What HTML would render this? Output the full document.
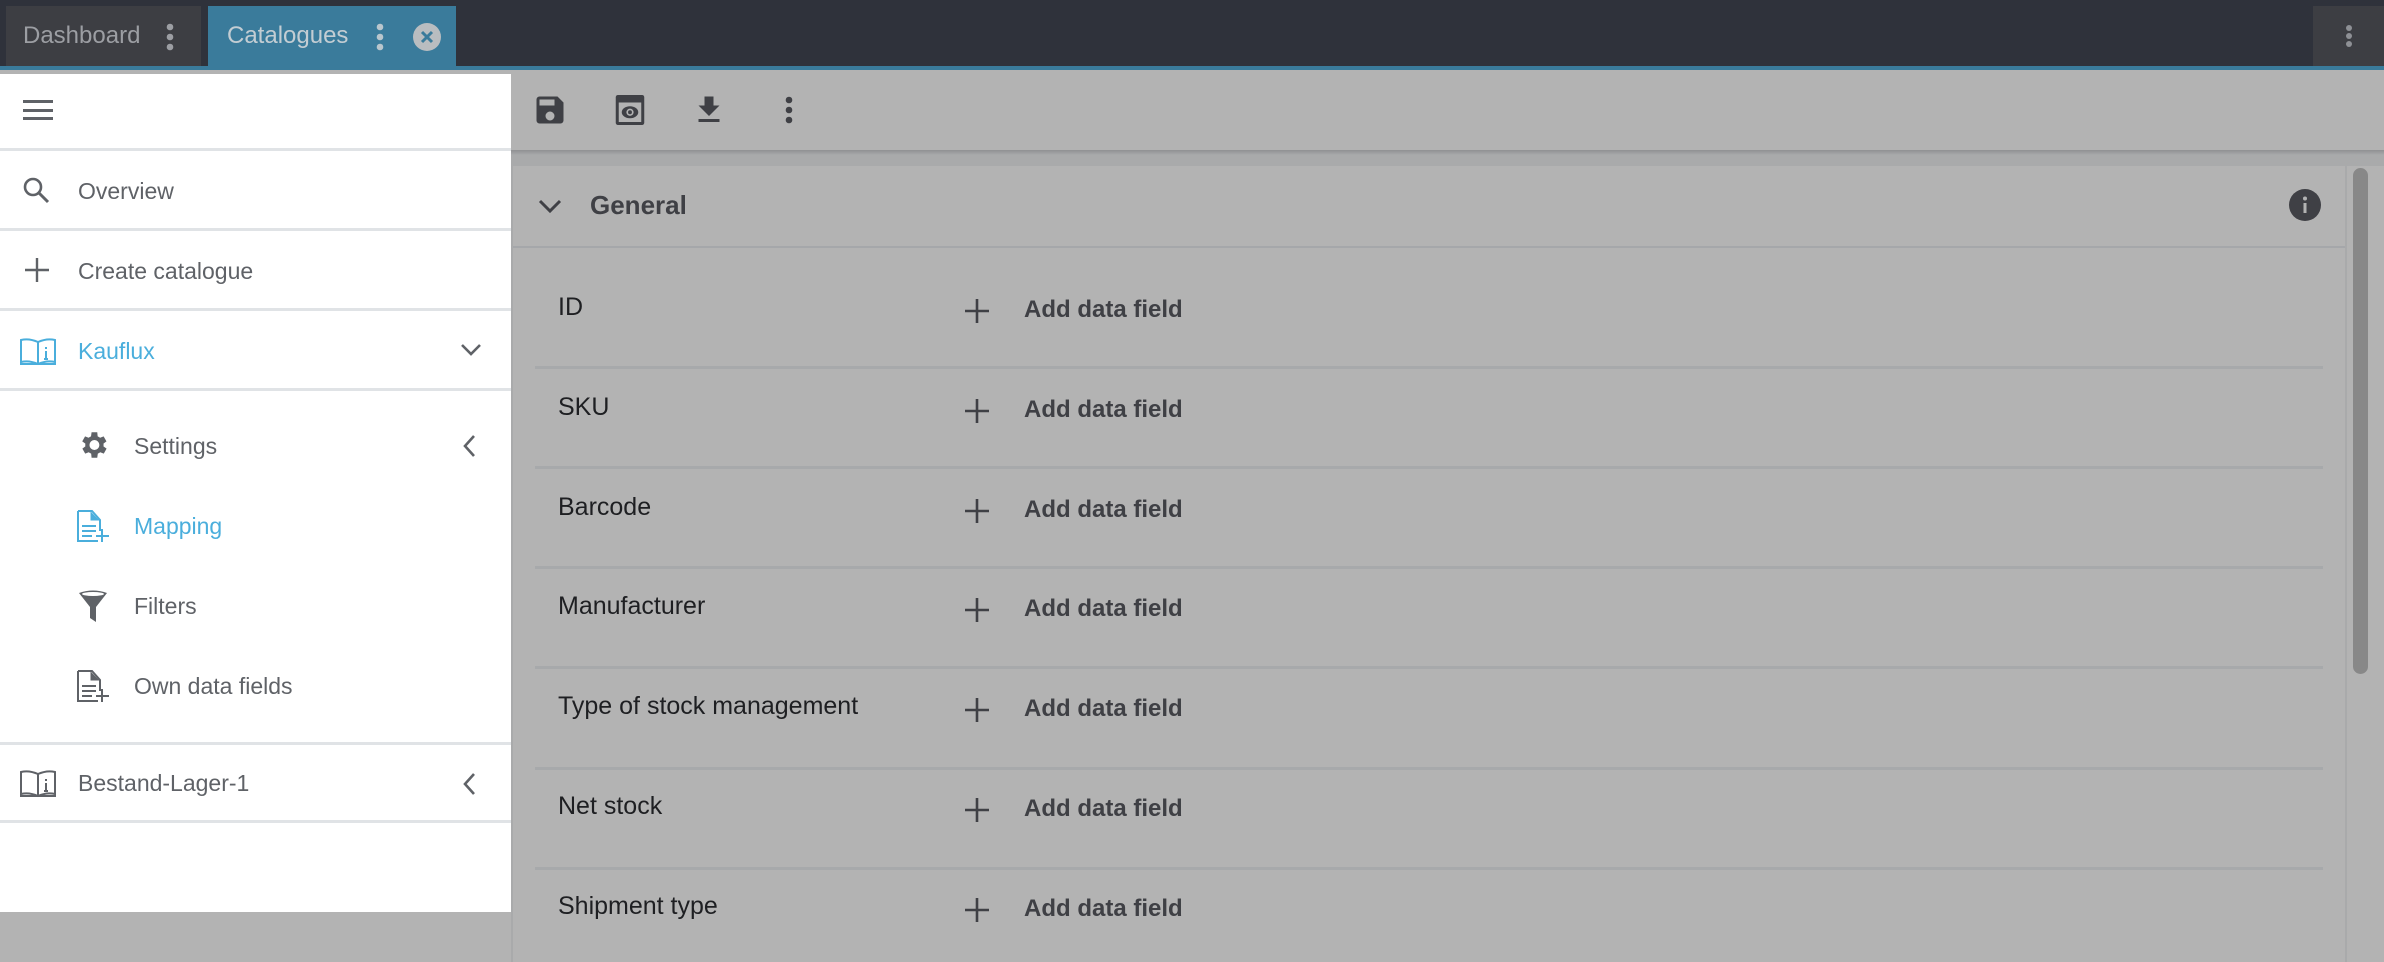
<!DOCTYPE html>
<html><head><meta charset="utf-8"><style>
*{margin:0;padding:0;box-sizing:border-box}
body{width:2384px;height:962px;overflow:hidden;background:#b3b3b3;font-family:"Liberation Sans",Roboto,sans-serif;position:relative}
.abs{position:absolute}
.top{left:0;top:0;width:2384px;height:66px;background:#2f323b}
.blue{left:0;top:66px;width:2384px;height:4px;background:#3a7b9b}
.tab{top:6px;height:60px;color:#9c9ea3;font-size:24px;line-height:60px}
.side{left:0;top:74px;width:511px;height:838px;background:#fff}
.sdiv{left:0;width:511px;height:3px;background:#e0e3e6}
.st{font-size:23px;color:#5f6267;line-height:30px}
.ct{font-size:25px;color:#1e1f22;line-height:30px}
.add{font-size:24px;font-weight:bold;color:#3f4045;line-height:30px}
.rdiv{left:535px;width:1788px;height:3px;background:#a7a9ab}
</style></head><body>
<div class="abs top"></div>
<div class="abs blue"></div>
<div class="abs tab" style="left:6px;width:195px;background:#3d3e43;padding-left:17px">Dashboard</div>
<svg class="abs" style="left:166px;top:23px" width="8" height="28"><circle cx="4" cy="4" r="3.3" fill="#9c9ea3"/><circle cx="4" cy="14" r="3.3" fill="#9c9ea3"/><circle cx="4" cy="24" r="3.3" fill="#9c9ea3"/></svg>
<div class="abs tab" style="left:208px;width:248px;background:#3a7b9b;color:#c3cdd3;padding-left:19px">Catalogues</div>
<svg class="abs" style="left:376px;top:23px" width="8" height="28"><circle cx="4" cy="4" r="3.3" fill="#b9c6cd"/><circle cx="4" cy="14" r="3.3" fill="#b9c6cd"/><circle cx="4" cy="24" r="3.3" fill="#b9c6cd"/></svg>
<svg class="abs" style="left:412px;top:22px" width="30" height="30"><circle cx="15" cy="15" r="14" fill="#b9bdc0"/><path d="M10 10l10 10M20 10l-10 10" stroke="#3a7b9b" stroke-width="3"/></svg>
<div class="abs" style="left:2313px;top:6px;width:71px;height:60px;background:#3d3e43"></div>
<svg class="abs" style="left:2345px;top:24px" width="8" height="26"><circle cx="4" cy="4" r="3" fill="#8e9095"/><circle cx="4" cy="12" r="3" fill="#8e9095"/><circle cx="4" cy="20" r="3" fill="#8e9095"/></svg>

<!-- sidebar -->
<div class="abs side"></div>
<div class="abs" style="left:23px;top:100px;width:30px;height:3px;background:#5f6267"></div>
<div class="abs" style="left:23px;top:109px;width:30px;height:3px;background:#5f6267"></div>
<div class="abs" style="left:23px;top:117px;width:30px;height:3px;background:#5f6267"></div>
<div class="abs sdiv" style="top:148px"></div>
<svg class="abs" style="left:22px;top:176px" width="30" height="30"><circle cx="11" cy="11" r="8" fill="none" stroke="#5f6267" stroke-width="2.6"/><path d="M17 17l9 9" stroke="#5f6267" stroke-width="3"/></svg>
<div class="abs st" style="left:78px;top:176px">Overview</div>
<div class="abs sdiv" style="top:228px"></div>
<svg class="abs" style="left:24px;top:257px" width="26" height="26"><path d="M13 1v24M1 13h24" stroke="#5f6267" stroke-width="2.4"/></svg>
<div class="abs st" style="left:78px;top:256px">Create catalogue</div>
<div class="abs sdiv" style="top:308px"></div>
<svg class="abs" style="left:19px;top:336px" width="38" height="32"><path d="M2 4q8-2 17 2q9-4 17-2v22q-8-2-17 2q-9-4-17-2z M19 6v22 M1 28h36" fill="none" stroke="#4aaedc" stroke-width="2"/><path d="M27 11v2M27 15v8M25 23h4" stroke="#4aaedc" stroke-width="2"/></svg>
<div class="abs st" style="left:78px;top:336px;color:#4aaedc">Kauflux</div>
<svg class="abs" style="left:460px;top:342px" width="22" height="16"><path d="M2 3l9 9 9-9" fill="none" stroke="#5f6267" stroke-width="2.6"/></svg>
<div class="abs sdiv" style="top:388px"></div>
<svg class="abs" style="left:76px;top:428px" width="34" height="34" viewBox="0 0 24 24"><path fill="#5f6267" d="M19.4 13a7.5 7.5 0 000-2l2.1-1.6-2-3.5-2.5 1a7.3 7.3 0 00-1.7-1L15 3h-4l-.4 2.9a7.3 7.3 0 00-1.7 1l-2.5-1-2 3.5L6.6 11a7.5 7.5 0 000 2l-2.1 1.6 2 3.5 2.5-1a7.3 7.3 0 001.7 1L11 21h4l.4-2.9a7.3 7.3 0 001.7-1l2.5 1 2-3.5zM13 15.5a3.5 3.5 0 110-7 3.5 3.5 0 010 7z"/></svg>
<div class="abs st" style="left:134px;top:431px">Settings</div>
<svg class="abs" style="left:462px;top:434px" width="16" height="24"><path d="M12 2l-9 10 9 10" fill="none" stroke="#5f6267" stroke-width="2.6"/></svg>
<svg class="abs" style="left:76px;top:508px" width="36" height="36"><path d="M2 3v30h20M2 3h14l8 9v11" fill="none" stroke="#4aaedc" stroke-width="2"/><path d="M15 4v8h8" fill="#4aaedc" stroke="#4aaedc" stroke-width="1"/><path d="M6 18h14M6 23h14M6 28h10M26 21v13M20 28h13" stroke="#4aaedc" stroke-width="2"/></svg>
<div class="abs st" style="left:134px;top:511px;color:#4aaedc">Mapping</div>
<svg class="abs" style="left:78px;top:590px" width="30" height="34"><path d="M1 3q14-5 28 0l-11 14v15l-6 -4v-11z" fill="#5f6267"/><ellipse cx="15" cy="4" rx="11" ry="2" fill="#fff"/></svg>
<div class="abs st" style="left:134px;top:591px">Filters</div>
<svg class="abs" style="left:76px;top:668px" width="36" height="36"><path d="M2 3v30h20M2 3h14l8 9v11" fill="none" stroke="#5f6267" stroke-width="2"/><path d="M15 4v8h8" fill="#5f6267" stroke="#5f6267" stroke-width="1"/><path d="M6 18h14M6 23h14M6 28h10M26 21v13M20 28h13" stroke="#5f6267" stroke-width="2"/></svg>
<div class="abs st" style="left:134px;top:671px">Own data fields</div>
<div class="abs sdiv" style="top:742px"></div>
<svg class="abs" style="left:19px;top:768px" width="38" height="32"><path d="M2 4q8-2 17 2q9-4 17-2v22q-8-2-17 2q-9-4-17-2z M19 6v22 M1 28h36" fill="none" stroke="#5f6267" stroke-width="2"/><path d="M27 11v2M27 15v8M25 23h4" stroke="#5f6267" stroke-width="2"/></svg>
<div class="abs st" style="left:78px;top:768px">Bestand-Lager-1</div>
<svg class="abs" style="left:462px;top:772px" width="16" height="24"><path d="M12 2l-9 10 9 10" fill="none" stroke="#5f6267" stroke-width="2.6"/></svg>
<div class="abs sdiv" style="top:820px"></div>

<!-- toolbar -->
<div class="abs" style="left:511px;top:150px;width:1873px;height:16px;background:linear-gradient(#8f9092,#a9aaab 5px,#a9aaab)"></div>
<svg class="abs" style="left:532px;top:92px" width="36" height="36" viewBox="0 0 24 24"><path fill="#3f4045" d="M17 3H5a2 2 0 00-2 2v14a2 2 0 002 2h14a2 2 0 002-2V7zM12 19a3 3 0 110-6 3 3 0 010 6zM15 9H5V5h10z"/></svg>
<svg class="abs" style="left:612px;top:92px" width="36" height="36" viewBox="0 0 24 24"><rect x="2.5" y="2" width="19" height="20" rx="1.5" fill="#3f4045"/><rect x="4.5" y="7" width="15" height="13" fill="#b3b3b3"/><ellipse cx="12" cy="13.5" rx="5.5" ry="4" fill="#3f4045"/><circle cx="12" cy="13.5" r="2.4" fill="#b3b3b3"/><circle cx="12" cy="13.5" r="1.3" fill="#3f4045"/></svg>
<svg class="abs" style="left:691px;top:92px" width="36" height="36" viewBox="0 0 24 24"><path fill="#3f4045" d="M19 9h-4V3H9v6H5l7 7zM5 18v2h14v-2z"/></svg>
<svg class="abs" style="left:784px;top:96px" width="10" height="30"><circle cx="5" cy="4" r="3.3" fill="#3f4045"/><circle cx="5" cy="14" r="3.3" fill="#3f4045"/><circle cx="5" cy="24" r="3.3" fill="#3f4045"/></svg>

<!-- card -->
<div class="abs" style="left:511px;top:166px;width:1836px;height:796px;background:#b3b3b3;border-left:2px solid #a9aaab;border-right:2px solid #a9aaab"></div>
<svg class="abs" style="left:538px;top:198px" width="24" height="16"><path d="M2 3l10 10 10-10" fill="none" stroke="#3f4045" stroke-width="3"/></svg>
<div class="abs" style="left:590px;top:190px;font-size:26px;font-weight:bold;color:#3f4045;line-height:30px">General</div>
<svg class="abs" style="left:2288px;top:188px" width="34" height="34"><circle cx="17" cy="17" r="16" fill="#3f4045"/><rect x="15.5" y="15" width="3" height="10" fill="#b3b3b3"/><circle cx="17" cy="10.5" r="2" fill="#b3b3b3"/></svg>
<div class="abs" style="left:513px;top:246px;width:1832px;height:2px;background:#a5a7aa"></div>

<div class="abs ct" style="left:558px;top:292px">ID</div>
<div class="abs ct" style="left:558px;top:392px">SKU</div>
<div class="abs ct" style="left:558px;top:492px">Barcode</div>
<div class="abs ct" style="left:558px;top:591px">Manufacturer</div>
<div class="abs ct" style="left:558px;top:691px">Type of stock management</div>
<div class="abs ct" style="left:558px;top:791px">Net stock</div>
<div class="abs ct" style="left:558px;top:891px">Shipment type</div>

<div class="abs rdiv" style="top:366px"></div>
<div class="abs rdiv" style="top:466px"></div>
<div class="abs rdiv" style="top:566px"></div>
<div class="abs rdiv" style="top:666px"></div>
<div class="abs rdiv" style="top:767px"></div>
<div class="abs rdiv" style="top:867px"></div>

<svg class="abs" style="left:964px;top:298px" width="26" height="26"><path d="M13 1v24M1 13h24" stroke="#3f4045" stroke-width="2.6"/></svg>
<div class="abs add" style="left:1024px;top:295px">Add data field</div>
<svg class="abs" style="left:964px;top:398px" width="26" height="26"><path d="M13 1v24M1 13h24" stroke="#3f4045" stroke-width="2.6"/></svg>
<div class="abs add" style="left:1024px;top:395px">Add data field</div>
<svg class="abs" style="left:964px;top:498px" width="26" height="26"><path d="M13 1v24M1 13h24" stroke="#3f4045" stroke-width="2.6"/></svg>
<div class="abs add" style="left:1024px;top:495px">Add data field</div>
<svg class="abs" style="left:964px;top:597px" width="26" height="26"><path d="M13 1v24M1 13h24" stroke="#3f4045" stroke-width="2.6"/></svg>
<div class="abs add" style="left:1024px;top:594px">Add data field</div>
<svg class="abs" style="left:964px;top:697px" width="26" height="26"><path d="M13 1v24M1 13h24" stroke="#3f4045" stroke-width="2.6"/></svg>
<div class="abs add" style="left:1024px;top:694px">Add data field</div>
<svg class="abs" style="left:964px;top:797px" width="26" height="26"><path d="M13 1v24M1 13h24" stroke="#3f4045" stroke-width="2.6"/></svg>
<div class="abs add" style="left:1024px;top:794px">Add data field</div>
<svg class="abs" style="left:964px;top:897px" width="26" height="26"><path d="M13 1v24M1 13h24" stroke="#3f4045" stroke-width="2.6"/></svg>
<div class="abs add" style="left:1024px;top:894px">Add data field</div>

<!-- scrollbar -->
<div class="abs" style="left:2353px;top:168px;width:15px;height:506px;border-radius:8px;background:#888"></div>
</body></html>
